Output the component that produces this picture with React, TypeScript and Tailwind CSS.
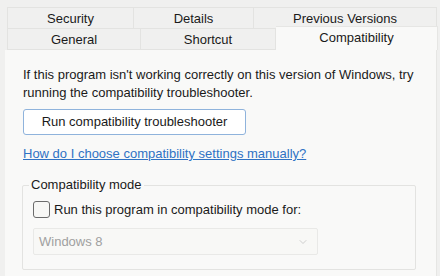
import { ChevronDown } from 'lucide-react';

function Tab({ label, width, selected }: { label: string; width: string; selected?: boolean }) {
  return (
    <div
      className={
        selected
          ? `${width} h-[24px] -mt-[2px] bg-[#f9f9f8] border-t border-r border-[#e6e6e4] flex justify-center pt-[3px] text-[13px] leading-[16px] text-[#1a1a1a]`
          : `${width} h-[22px] bg-[#f0f0ef] border-r border-b border-t border-[#e3e3e1] flex items-center justify-center pt-[2px] text-[13px] leading-[16px] text-[#1a1a1a]`
      }
    >
      {label}
    </div>
  );
}

export default function App() {
  return (
    <div
      className="w-[440px] h-[276px] bg-[#f0f0ef] overflow-hidden pt-[7px]"
      style={{ fontFamily: '"Liberation Sans", Arial, sans-serif' }}
    >
      <div className="flex ml-[7px] border-l border-[#e3e3e1] w-[430px]">
        <Tab label="Security" width="w-[126px]" />
        <Tab label="Details" width="w-[120px]" />
        <Tab label="Previous Versions" width="w-[183px]" />
      </div>
      <div className="flex ml-[7px] -mt-px">
        <div className="flex border-l border-[#e3e3e1]">
          <Tab label="General" width="w-[133px]" />
          <Tab label="Shortcut" width="w-[135px]" />
        </div>
        <Tab label="Compatibility" width="w-[162px]" selected />
      </div>

      <div className="ml-[5px] w-[432px] h-[230px] bg-[#f9f9f8] border-r border-[#e6e6e4] pl-[18px] pt-[16px] text-[13px] text-[#1a1a1a]">
        <p className="leading-[18px] w-[410px]">
          If this program isn't working correctly on this version of Windows, try running the compatibility troubleshooter.
        </p>
        <button
          type="button"
          className="mt-[7px] w-[223px] h-[26px] rounded-[3px] border border-[#8fb3dc] bg-white text-[13px] text-[#1a1a1a] flex items-center justify-center"
        >
          Run compatibility troubleshooter
        </button>
        <a href="#" className="block mt-[11px] text-[13px] leading-[16px] text-[#2f72c4] underline">
          How do I choose compatibility settings manually?
        </a>

        <div className="relative mt-[23px] w-[394px] h-[85px] border border-[#e3e3e1] rounded-[2px] -ml-px pl-[10px] pt-[15px]">
          <span className="absolute -top-[9px] left-[6px] px-[2px] bg-[#f9f9f8] text-[13px] leading-[16px]">
            Compatibility mode
          </span>
          <label className="flex items-center gap-[4px] text-[13px] leading-[17px]">
            <span className="w-[17px] h-[17px] rounded-[3px] border border-[#6b6b6b] bg-[#f7f7f5]" />
            Run this program in compatibility mode for:
          </label>
          <div className="mt-[10px] w-[285px] h-[27px] border border-[#e9e9e7] bg-[#f8f8f6] rounded-[2px] flex items-center justify-between pl-[5px] pr-[8px] text-[13px] text-[#a0a0a0]">
            <span>Windows 8</span>
            <ChevronDown size={12} strokeWidth={1.25} className="text-[#b5b5b5]" />
          </div>
        </div>
      </div>
    </div>
  );
}
